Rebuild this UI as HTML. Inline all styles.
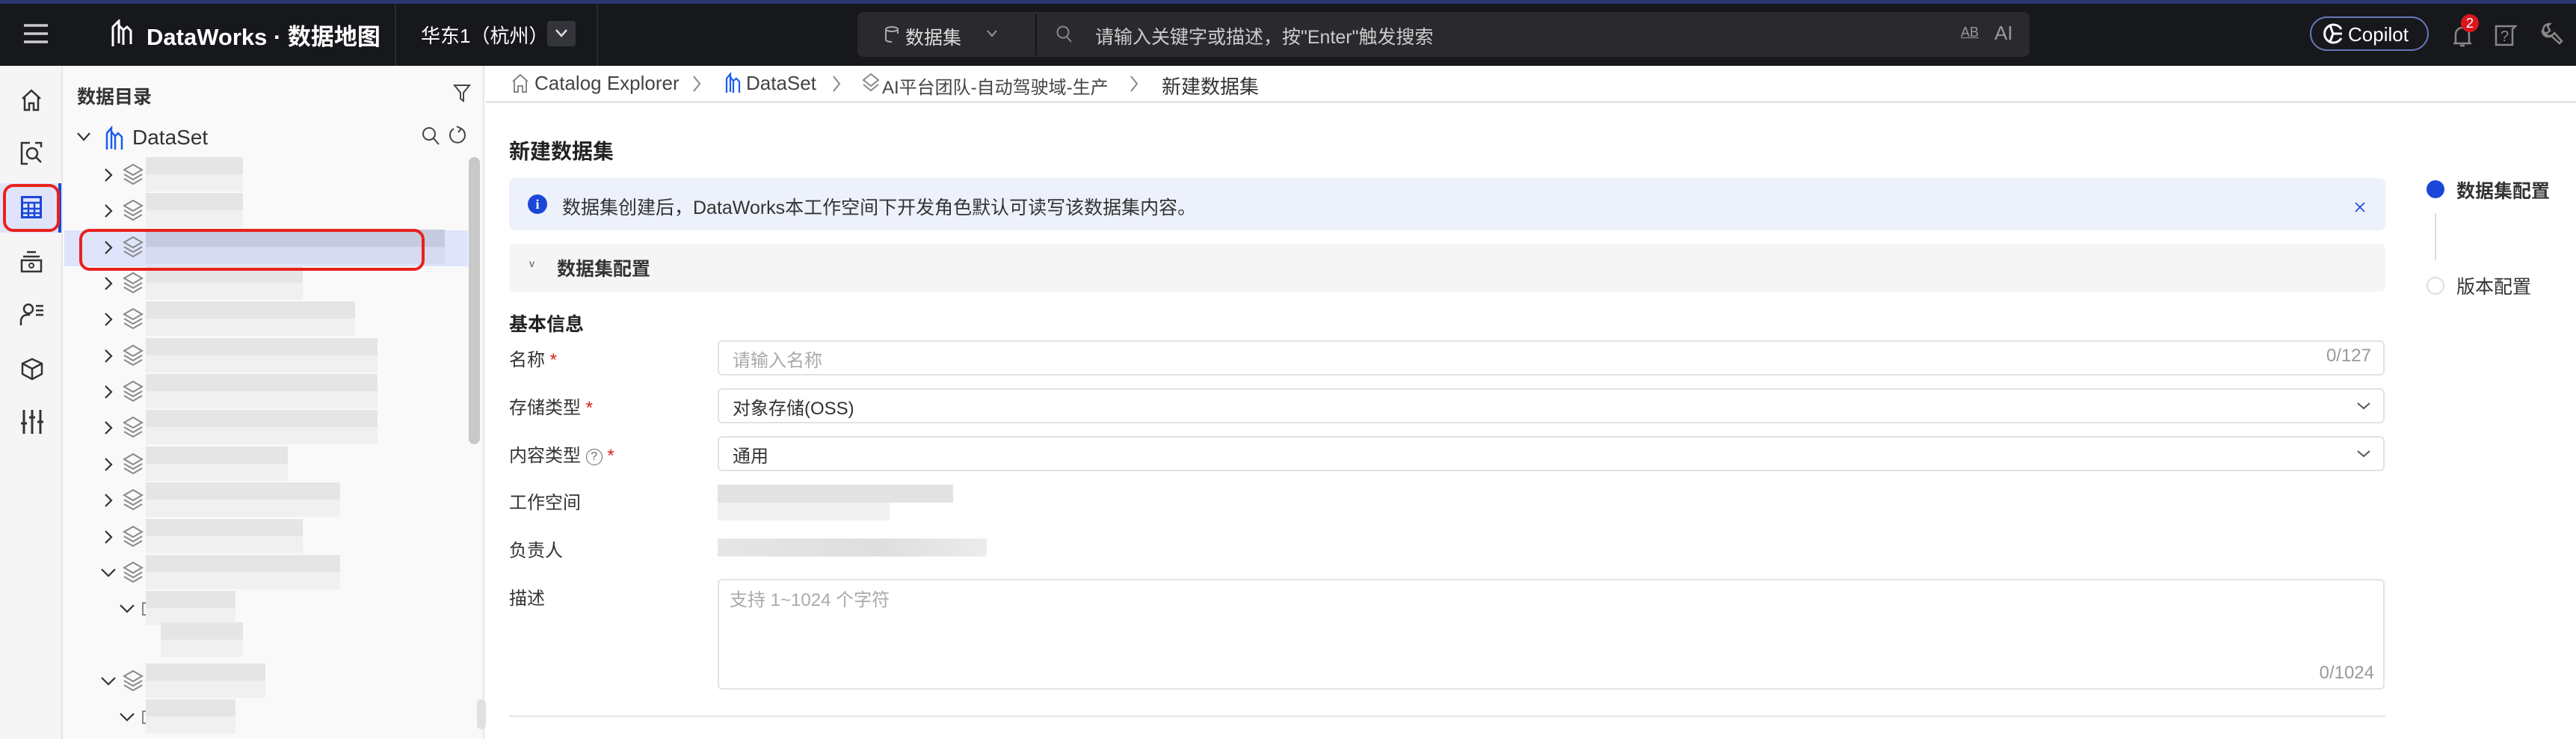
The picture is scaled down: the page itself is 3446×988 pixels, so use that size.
<!DOCTYPE html>
<html><head><meta charset="utf-8">
<style>
*{box-sizing:border-box;margin:0;padding:0}
body{width:3446px;height:988px;overflow:hidden;background:#fff;font-family:"Liberation Sans","Noto Sans CJK SC",sans-serif;color:#333;position:relative}
.a{position:absolute}
.hd{left:0;top:0;width:3446px;height:88px;background:#17181c;border-top:5px solid #2b3870}
.w{color:#fff}
.rail{left:0;top:88px;width:84px;height:900px;background:#f5f5f5;border-right:2px solid #e6e6e6}
.tree{left:84px;top:88px;width:564px;height:900px;background:#f9f9f9;border-right:2px solid #e6e6e6}
.blur{position:absolute;height:46px;background:linear-gradient(#e5e5e5 0 50%,#f0f0f0 50% 100%)}
.lbl{position:absolute;left:681px;font-size:24px;color:#333}
.req{color:#d9211c}
.inp{position:absolute;left:960px;width:2230px;border:2px solid #e2e2e2;border-radius:6px;background:#fff;font-size:24px}
</style></head><body>
<div class="a hd"></div>
<svg class="a" style="left:30px;top:30px" width="36" height="30"><path d="M2 4h32M2 15h32M2 26h32" stroke="#ccc" stroke-width="3.5"/></svg>
<svg class="a" style="left:145px;top:26px" width="36" height="38" viewBox="0 0 36 38"><path d="M6 36V10l8-8v30M14 8l6 6v20M20 14l5-4 5 5v18" stroke="#fff" stroke-width="3" fill="none"/></svg>
<div class="a w" style="left:196px;top:24px;font-size:31px;font-weight:bold">DataWorks · 数据地图</div>
<div class="a" style="left:528px;top:5px;width:2px;height:83px;background:#2a2b30"></div>
<div class="a w" style="left:563px;top:28px;font-size:26px">华东1（杭州）</div>
<div class="a" style="left:732px;top:28px;width:38px;height:34px;background:#33353b;border-radius:4px"></div>
<svg class="a" style="left:741px;top:36px" width="20" height="16"><path d="M3 4l7 8 7-8" stroke="#ddd" stroke-width="2.5" fill="none"/></svg>
<div class="a" style="left:798px;top:5px;width:2px;height:83px;background:#2a2b30"></div>
<div class="a" style="left:1147px;top:16px;width:1568px;height:60px;background:#2a2a2e;border-radius:8px"></div>
<div class="a" style="left:1385px;top:18px;width:2px;height:56px;background:#151518"></div>
<svg class="a" style="left:1183px;top:34px" width="22" height="24"><ellipse cx="10" cy="5" rx="8" ry="3" stroke="#aaa" fill="none" stroke-width="2"/><path d="M2 5v14c0 2 4 3 8 3M18 5v6" stroke="#aaa" fill="none" stroke-width="2"/></svg>
<div class="a" style="left:1211px;top:31px;font-size:25px;color:#ddd">数据集</div>
<svg class="a" style="left:1318px;top:38px" width="18" height="14"><path d="M3 3l6 7 6-7" stroke="#999" stroke-width="2" fill="none"/></svg>
<svg class="a" style="left:1412px;top:33px" width="24" height="26"><circle cx="10" cy="10" r="7.5" stroke="#888" stroke-width="2" fill="none"/><path d="M15 16l6 7" stroke="#888" stroke-width="2"/></svg>
<div class="a" style="left:1465px;top:30px;font-size:25px;color:#ccc">请输入关键字或描述，按"Enter"触发搜索</div>
<div class="a" style="left:2623px;top:33px;font-size:18px;color:#999;text-decoration:underline">AB</div>
<div class="a" style="left:2668px;top:29px;font-size:26px;color:#999">AI</div>
<div class="a" style="left:3090px;top:22px;width:159px;height:46px;border:2px solid #6676b8;border-radius:23px"></div>
<svg class="a" style="left:3106px;top:30px" width="30" height="30"><path d="M26 9A12 12 0 1 0 26 21" stroke="#fff" stroke-width="3" fill="none"/><path d="M15 15h12M15 15L11 4M15 15l-4 11" stroke="#fff" stroke-width="3"/></svg>
<div class="a w" style="left:3141px;top:31px;font-size:26px">Copilot</div>
<svg class="a" style="left:3278px;top:30px" width="32" height="34"><path d="M4 28h24M7 28V16a9 9 0 0 1 18 0v12M13 31h6" stroke="#888" stroke-width="2.5" fill="none"/></svg>
<div class="a" style="left:3292px;top:19px;width:24px;height:24px;border-radius:12px;background:#d9161f;color:#fff;font-size:18px;text-align:center;line-height:24px">2</div>
<svg class="a" style="left:3336px;top:30px" width="32" height="32"><path d="M3 5h26l-4 4v21H3z" stroke="#888" stroke-width="2.5" fill="none"/><text x="9" y="25" font-size="20" fill="#888" font-family="Liberation Sans">?</text></svg>
<svg class="a" style="left:3397px;top:28px" width="34" height="34"><path d="M14 4a8 8 0 1 0 6 12l10 11-3 3-11-10a8 8 0 0 1-12-6l5 3 5-4-3-6z" stroke="#888" stroke-width="2.5" fill="none"/></svg>

<div class="a rail"></div>
<svg class="a" style="left:26px;top:118px" width="32" height="32"><path d="M4 14L16 3l12 11M7 12v17h6v-9h6v9h6V12" stroke="#333" stroke-width="2.5" fill="none"/></svg>
<svg class="a" style="left:26px;top:188px" width="32" height="34"><path d="M14 3H3v28h8M21 3h8v6" stroke="#333" stroke-width="2.5" fill="none"/><circle cx="17" cy="17" r="7" stroke="#333" stroke-width="2.5" fill="none"/><path d="M22 22l7 7" stroke="#333" stroke-width="2.5"/></svg>
<div class="a" style="left:0;top:245px;width:82px;height:66px;background:#dfe4fb;border-right:4px solid #1b47d8"></div>
<div class="a" style="left:4px;top:246px;width:76px;height:64px;border:4px solid #e8211e;border-radius:14px"></div>
<svg class="a" style="left:28px;top:262px" width="28" height="30"><rect x="1.5" y="1.5" width="25" height="27" stroke="#1b47d8" stroke-width="3" fill="none"/><path d="M1 9h26M1 17h26M1 23h26M10 9v20M18 9v20" stroke="#1b47d8" stroke-width="2.5"/></svg>
<svg class="a" style="left:26px;top:334px" width="32" height="32"><path d="M10 3h12M5 9h22M3 14h26v15H3z" stroke="#333" stroke-width="2.5" fill="none"/><circle cx="16" cy="21" r="3" stroke="#333" stroke-width="2" fill="none"/></svg>
<svg class="a" style="left:26px;top:404px" width="34" height="34"><circle cx="12" cy="9" r="6" stroke="#333" stroke-width="2.5" fill="none"/><path d="M2 31v-6a8 8 0 0 1 8-8h4M22 5h10M22 11h10M22 17h10" stroke="#333" stroke-width="2.5" fill="none"/></svg>
<svg class="a" style="left:26px;top:476px" width="34" height="34"><path d="M17 4l13 6v14l-13 7-13-7V10zM4 10l13 7 13-7M17 17v14" stroke="#333" stroke-width="2.5" fill="none"/></svg>
<svg class="a" style="left:26px;top:546px" width="34" height="36"><path d="M6 2v32M17 2v32M28 2v32M2 20h8M13 12h8M24 18h8" stroke="#333" stroke-width="3"/></svg>

<div class="a tree"></div>
<div class="a" style="left:103px;top:110px;font-size:25px;font-weight:bold;color:#333">数据目录</div>
<svg class="a" style="left:606px;top:111px" width="24" height="26"><path d="M2 3h20l-8 10v11l-4-3V13z" stroke="#444" stroke-width="2" fill="none"/></svg>
<svg class="a" style="left:102px;top:176px" width="20" height="14"><path d="M2 2l8 9 8-9" stroke="#333" stroke-width="2.2" fill="none"/></svg>
<svg class="a" style="left:138px;top:168px" width="30" height="34"><path d="M5 32V10l6-7v28M11 8l5 6v18M16 14l4-4 5 5v17" stroke="#1b5cf0" stroke-width="2.5" fill="none"/></svg>
<div class="a" style="left:177px;top:168px;font-size:28px;color:#333">DataSet</div>
<svg class="a" style="left:563px;top:168px" width="26" height="28"><circle cx="11" cy="11" r="8" stroke="#444" stroke-width="2" fill="none"/><path d="M17 17l7 8" stroke="#444" stroke-width="2"/></svg>
<svg class="a" style="left:600px;top:167px" width="24" height="28"><path d="M17 5a10 10 0 1 1-10 0M11 2l6 3-4 5" stroke="#444" stroke-width="2" fill="none"/></svg>
<div class="a" style="left:627px;top:210px;width:15px;height:384px;border-radius:8px;background:#c8c8c8"></div>
<div class="a" style="left:638px;top:935px;width:12px;height:40px;border-radius:6px;background:#e0e0e0"></div>
<div class="a" style="left:86px;top:308px;width:540px;height:48px;background:#dfe4fb"></div>

<div id="rows"></div>
<script>
var rows=[[233,'>',0,130],[281,'>',0,130],[330,'>',0,400,1],[378,'>',0,210],[426,'>',0,280],[475,'>',0,310],[523,'>',0,310],[571,'>',0,310],[620,'>',0,190],[668,'>',0,260],[717,'>',0,210],[765,'v',0,260],[813,'v',1,120],[855,'',2,130],[910,'v',0,160],[958,'v',1,120]];
var h='';
rows.forEach(function(r){var y=r[0],ind=r[2]*25;
 var cx=138+ind;
 if(r[1]=='>')h+='<svg class="a" style="left:'+cx+'px;top:'+(y-10)+'px" width="14" height="22"><path d="M3 3l8 8-8 8" stroke="#333" stroke-width="2.2" fill="none"/></svg>';
 if(r[1]=='v')h+='<svg class="a" style="left:'+(cx-4)+'px;top:'+(y-6)+'px" width="22" height="14"><path d="M2 2l9 9 9-9" stroke="#333" stroke-width="2.2" fill="none"/></svg>';
 if(r[2]==0)h+='<svg class="a" style="left:163px;top:'+(y-16)+'px" width="30" height="32"><path d="M15 3l12 7-12 7-12-7zM3 16l12 7 12-7M3 22l12 7 12-7" stroke="#888" stroke-width="2" fill="none"/></svg>';
 if(r[2]==1)h+='<div class="a" style="left:190px;top:'+(y-8)+'px;width:8px;height:18px;border:2px solid #888;border-right:none"></div>';
 var x=r[2]==2?215:195, bg=r[4]?'linear-gradient(#c6cade 0 50%,#d6daee 50% 100%)':'';
 h+='<div class="blur" style="left:'+x+'px;top:'+(y-23)+'px;width:'+(r[2]==2?110:r[3])+'px;'+(bg?'background:'+bg:'')+'"></div>';
});
document.getElementById('rows').innerHTML=h;
</script>
<div class="a" style="left:106px;top:306px;width:462px;height:56px;border:4px solid #e8211e;border-radius:14px"></div>

<div class="a" style="left:650px;top:135px;width:2796px;height:3px;background:#e6e6e6"></div>
<svg class="a" style="left:683px;top:97px" width="26" height="28"><path d="M3 12L13 3l10 9M5 10v16h5v-8h6v8h5V10" stroke="#888" stroke-width="2" fill="none"/></svg>
<div class="a" style="left:715px;top:96px;font-size:26px;color:#444">Catalog Explorer</div>
<svg class="a" style="left:925px;top:99px" width="14" height="26"><path d="M3 3l8 10-8 10" stroke="#888" stroke-width="2" fill="none"/></svg>
<svg class="a" style="left:968px;top:96px" width="24" height="30"><path d="M4 28V9l5-6v24M9 7l4 5v16M13 12l4-3 4 4v15" stroke="#1b5cf0" stroke-width="2.2" fill="none"/></svg>
<div class="a" style="left:998px;top:96px;font-size:26px;color:#444">DataSet</div>
<svg class="a" style="left:1112px;top:99px" width="14" height="26"><path d="M3 3l8 10-8 10" stroke="#888" stroke-width="2" fill="none"/></svg>
<svg class="a" style="left:1152px;top:96px" width="26" height="30"><path d="M13 3l10 8-10 8-10-8zM3 17l10 8 10-8" stroke="#888" stroke-width="2" fill="none"/></svg>
<div class="a" style="left:1180px;top:97px;font-size:24px;color:#444">AI平台团队-自动驾驶域-生产</div>
<svg class="a" style="left:1510px;top:99px" width="14" height="26"><path d="M3 3l8 10-8 10" stroke="#888" stroke-width="2" fill="none"/></svg>
<div class="a" style="left:1554px;top:96px;font-size:26px;color:#333">新建数据集</div>

<div class="a" style="left:681px;top:181px;font-size:28px;font-weight:bold;color:#222">新建数据集</div>
<div class="a" style="left:681px;top:238px;width:2510px;height:70px;background:#edf1fb;border-radius:8px"></div>
<div class="a" style="left:706px;top:260px;width:26px;height:26px;border-radius:13px;background:#1b47d8;color:#fff;font-size:18px;font-weight:bold;text-align:center;line-height:26px;font-family:'Liberation Serif',serif">i</div>
<div class="a" style="left:752px;top:258px;font-size:25px;color:#333">数据集创建后，DataWorks本工作空间下开发角色默认可读写该数据集内容。</div>
<svg class="a" style="left:3150px;top:270px" width="14" height="14"><path d="M1 1l12 12M13 1L1 13" stroke="#1b47d8" stroke-width="1.6"/></svg>
<div class="a" style="left:681px;top:326px;width:2510px;height:64px;background:#f5f5f5;border-radius:8px"></div>
<div class="a" style="left:708px;top:344px;font-size:14px;color:#555">v</div>
<div class="a" style="left:745px;top:340px;font-size:25px;font-weight:bold;color:#333">数据集配置</div>

<div class="a" style="left:681px;top:414px;font-size:25px;font-weight:bold;color:#222">基本信息</div>
<div class="lbl" style="top:461px">名称 <span class="req">*</span></div>
<div class="inp" style="top:455px;height:47px"><span class="a" style="left:18px;top:5px;color:#aaa">请输入名称</span><span class="a" style="right:16px;top:5px;color:#999">0/127</span></div>
<div class="lbl" style="top:525px">存储类型 <span class="req">*</span></div>
<div class="inp" style="top:519px;height:47px"><span class="a" style="left:18px;top:5px;color:#333">对象存储(OSS)</span><svg class="a" style="right:16px;top:16px" width="20" height="12"><path d="M2 2l8 7 8-7" stroke="#555" stroke-width="2" fill="none"/></svg></div>
<div class="lbl" style="top:589px">内容类型 <span style="display:inline-block;width:22px;height:22px;border:1.5px solid #666;border-radius:11px;font-size:16px;text-align:center;line-height:19px;color:#666;vertical-align:2px">?</span> <span class="req">*</span></div>
<div class="inp" style="top:583px;height:47px"><span class="a" style="left:18px;top:5px;color:#333">通用</span><svg class="a" style="right:16px;top:16px" width="20" height="12"><path d="M2 2l8 7 8-7" stroke="#555" stroke-width="2" fill="none"/></svg></div>
<div class="lbl" style="top:652px">工作空间</div>
<div class="blur" style="left:960px;top:648px;width:315px;height:24px;background:#e2e2e2"></div>
<div class="blur" style="left:960px;top:672px;width:230px;height:24px;background:#f1f1f1"></div>
<div class="lbl" style="top:716px">负责人</div>
<div class="blur" style="left:960px;top:720px;width:360px;height:24px;background:linear-gradient(90deg,#e6e6e6,#dedede 60%,#ececec)"></div>
<div class="lbl" style="top:780px">描述</div>
<div class="inp" style="top:774px;height:148px"><span class="a" style="left:14px;top:6px;color:#aaa">支持 1~1024 个字符</span><span class="a" style="right:12px;bottom:6px;color:#999">0/1024</span></div>
<div class="a" style="left:681px;top:956px;width:2510px;height:3px;background:#eaeaea"></div>

<div class="a" style="left:3246px;top:241px;width:24px;height:24px;border-radius:12px;background:#1b47d8"></div>
<div class="a" style="left:3286px;top:236px;font-size:25px;font-weight:bold;color:#333">数据集配置</div>
<div class="a" style="left:3257px;top:285px;width:2px;height:63px;background:#ddd"></div>
<div class="a" style="left:3246px;top:370px;width:24px;height:24px;border-radius:12px;border:2px solid #ddd;background:#fff"></div>
<div class="a" style="left:3286px;top:364px;font-size:25px;color:#333">版本配置</div>
</body></html>
